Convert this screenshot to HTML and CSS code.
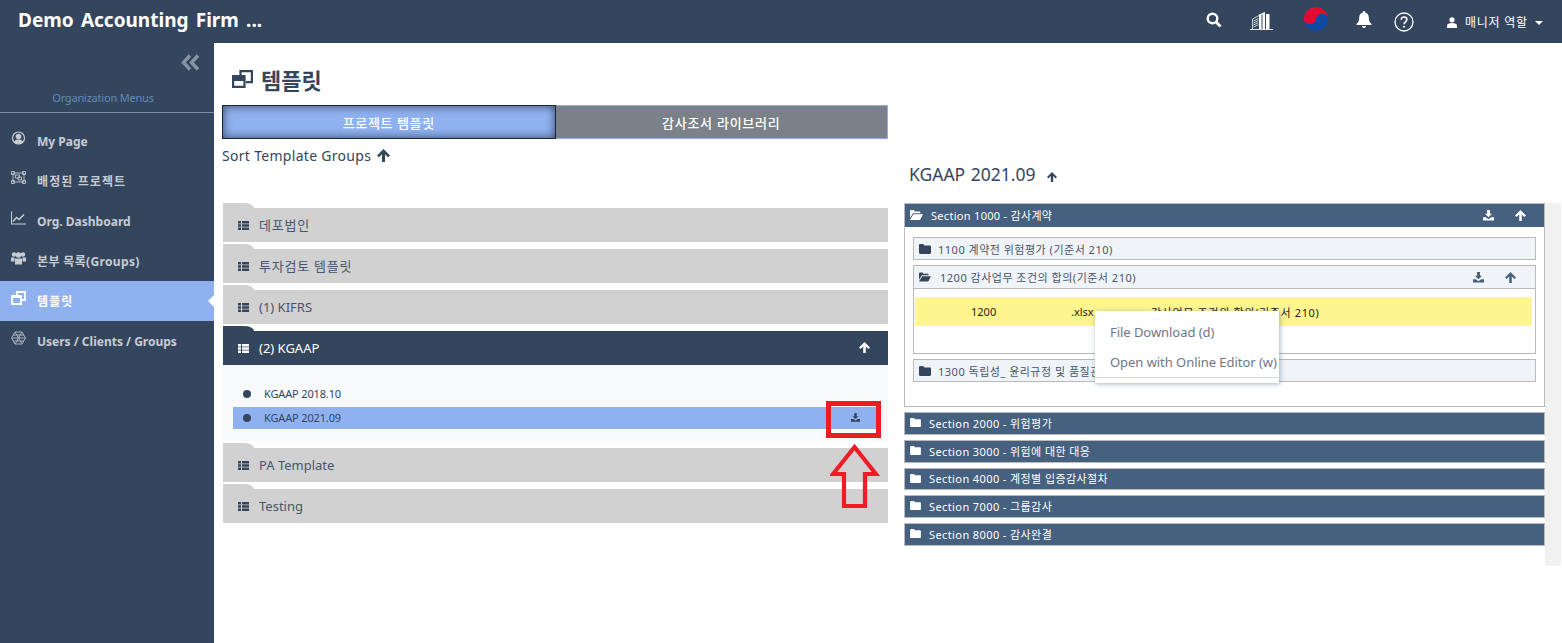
FILE: index.html
```html
<!DOCTYPE html>
<html lang="ko">
<head>
<meta charset="utf-8">
<title>템플릿</title>
<link rel="stylesheet" href="styles.css">
</head>
<body>
<svg class="defs" width="0" height="0">
  <symbol id="i-list" viewBox="0 0 11 9"><path d="M0 0h3v2.400H0zM4 0h7v2.400H4zM0 3.300h3v2.400H0zM4 3.300h7v2.400H4zM0 6.600h3V9H0zM4 6.600h7V9H4z"/></symbol>
  <symbol id="i-folder" viewBox="0 0 12 10"><path d="M1.200 0h3l1.200 1.400h5.400c.7 0 1.200.5 1.200 1.200v6.200c0 .7-.5 1.200-1.200 1.200H1.200C.5 10 0 9.500 0 8.800V1.200C0 .5.500 0 1.200 0z"/></symbol>
  <symbol id="i-open" viewBox="0 0 13 10"><path d="M0 8V1.200C0 .5.500 0 1.200 0h2.600l1.200 1.400h4.200c.7 0 1.200.5 1.200 1.200v.6H3L0 8zM3.400 4.200H13L10 10H0l3.400-5.800z"/></symbol>
  <symbol id="i-up" viewBox="0 0 12 12"><path d="M6 0l6 6-1.700 1.700L7.400 4.900V12H4.600V4.900L1.700 7.700 0 6z"/></symbol>
  <symbol id="i-down" viewBox="0 0 12 12"><path d="M4.400 0h3.200v4.200h2.300L6 8 2.100 4.200h2.300zM0 8h3l3 2 3-2h3v3.500H0z"/></symbol>
  <symbol id="i-clone" viewBox="0 0 21 18"><path fill="none" stroke="currentColor" stroke-width="2.200" d="M8.500 5V1.100h11.400v11h-6"/><path fill="none" stroke="currentColor" stroke-width="2.200" d="M1.100 6h11.400v10.900H1.100z"/><path fill="currentColor" d="M1 5h11.500v6H1z"/></symbol>
</svg>

<header class="topbar">
  <div class="brand">Demo Accounting Firm ...</div>
  <div class="top-tools">
    <svg class="t-search" viewBox="0 0 16 16"><circle cx="6.500" cy="6.500" r="4.800" fill="none" stroke="#fff" stroke-width="2.400"/><path d="M10 10l4.500 4.500" stroke="#fff" stroke-width="2.800"/></svg>
    <svg class="t-building" viewBox="0 0 23 18"><path d="M0 17.500h23" stroke="#dfe3e8" fill="none"/><path d="M2.500 17V7L9 3.500M3.500 9l5-2.500M3.500 11l5-2.500M3.500 13l5-2.500M3.500 15l5-2.500" stroke="#dfe3e8" stroke-width=".9" fill="none"/><path d="M9 2.500L15 0v17H9zM16 2h3.500v15H16z" fill="#fff"/><path d="M11.500 2.500h1V17h-1z" fill="#34465e"/></svg>
    <svg class="t-flag" viewBox="0 0 24 24"><circle cx="12" cy="12" r="12" fill="#0f49a3"/><path d="M0 12a12 12 0 0 1 24 0c0-3.300-2.700-5-6-5s-6 2.500-6 5-2.700 5-6 5-6-1.700-6-5z" fill="#e30a32"/></svg>
    <svg class="t-bell" viewBox="0 0 16 17"><path fill="#fff" d="M8 0c.8 0 1.300.6 1.200 1.400C11.600 2 12.800 4 12.800 6.500c0 3.500 1 5 2.700 6.500v1H.5v-1C2.200 11.500 3.200 10 3.200 6.500c0-2.500 1.200-4.500 3.600-5.100C6.700.6 7.200 0 8 0zM6 15h4c0 1.100-.9 2-2 2s-2-.9-2-2z"/></svg>
    <svg class="t-help" viewBox="0 0 20 20"><circle cx="10" cy="10" r="9" fill="none" stroke="#fff" stroke-width="1.300"/><path d="M7.200 7.800C7.200 6 8.400 5 10 5s2.900 1 2.900 2.600c0 2.300-2.900 2.300-2.900 4.700" fill="none" stroke="#fff" stroke-width="1.500"/><circle cx="10" cy="14.800" r="1" fill="#fff"/></svg>
    <div class="t-user">
      <svg class="t-person" viewBox="0 0 10 11"><circle cx="5" cy="2.800" r="2.600" fill="#fff"/><path d="M0 11V8.500C0 7 2 6 5 6s5 1 5 2.500V11z" fill="#fff"/></svg>
      <span class="ko">매니저 역할</span>
      <span class="caret"></span>
    </div>
  </div>
</header>

<div class="shell">
  <nav class="sidebar">
    <div class="collapse">
      <svg class="collapse-icon" viewBox="0 0 19 17" fill="none" stroke="#8593a5" stroke-width="3.400"><path d="M9 1.500L2.500 8.500 9 15.500M17 1.500L10.500 8.500 17 15.500"/></svg>
    </div>
    <div class="org-label">Organization Menus</div>
    <ul class="menu">
      <li class="menu-item">
        <svg class="m-icon" viewBox="0 0 14 14"><circle cx="7" cy="7" r="6" fill="none" stroke="#c8ccd2" stroke-width="1.200"/><circle cx="7" cy="5.500" r="2.800" fill="#c8ccd2"/><path d="M2.500 11c1-2 2.500-2.500 4.500-2.500s3.500.5 4.500 2.500c-2.500 2.500-6.500 2.500-9 0z" fill="#c8ccd2"/></svg>
        <span>My Page</span>
      </li>
      <li class="menu-item">
        <svg class="m-icon" viewBox="0 0 15 14" fill="none" stroke="#b6bcc5" stroke-width="1"><path d="M2 2h11v9H2zM.5.500h3v3h-3zM11.500.500h3v3h-3zM.5 9.500h3v3h-3zM11.500 9.500h3v3h-3zM4.500 4h4v3h-4zM7 6h3.500v3H7z"/></svg>
        <span class="ko-wide">배정된 프로젝트</span>
      </li>
      <li class="menu-item">
        <svg class="m-icon" viewBox="0 0 15 13" fill="none" stroke="#c8ccd2" stroke-width="1.100"><path d="M.5 0v12.500H15"/><path d="M2 10l3.500-4 2.500 2 5-5" stroke-width="1.500"/></svg>
        <span>Org. Dashboard</span>
      </li>
      <li class="menu-item">
        <svg class="m-icon" viewBox="0 0 15 13" fill="#c8ccd2"><circle cx="3" cy="3" r="2.200"/><circle cx="12" cy="3" r="2.200"/><circle cx="7.500" cy="3.500" r="2.800"/><path d="M0 6h3.500v4H0zM11.500 6H15v4h-3.500zM4 7h7v6H4z"/></svg>
        <span class="ko-mix">본부 목록(Groups)</span>
      </li>
      <li class="menu-item active">
        <svg class="m-icon" viewBox="0 0 15 14" fill="none" stroke="#fff" stroke-width="1.800"><path d="M6 4V1h8v8h-4"/><path d="M1 5h9v8H1z"/><path d="M1 5.800h9" stroke-width="2.400"/></svg>
        <span class="ko-wide">템플릿</span>
      </li>
      <li class="menu-item">
        <svg class="m-icon" viewBox="0 0 15 14" fill="none" stroke="#b6bcc5" stroke-width=".9"><path d="M4 1h7l3.500 6-3.500 6H4L.5 7zM4 1l7 12M11 1L4 13M.5 7h14M2 4h11M2 10h11"/></svg>
        <span>Users / Clients / Groups</span>
      </li>
    </ul>
  </nav>

  <main class="content">
    <h1 class="page-title">
      <svg class="title-icon"><use href="#i-clone"/></svg>
      <span>템플릿</span>
    </h1>
    <div class="columns">
      <section class="left">
        <div class="tabs">
          <div class="tab tab-on">프로젝트 템플릿</div>
          <div class="tab tab-off">감사조서 라이브러리</div>
        </div>
        <div class="sort">Sort Template Groups <svg class="sort-up"><use href="#i-up"/></svg></div>
        <div class="groups">
          <div class="group"><svg class="g-icon"><use href="#i-list"/></svg><span class="ko g-ko">데포법인</span></div>
          <div class="group"><svg class="g-icon"><use href="#i-list"/></svg><span class="ko g-ko">투자검토 템플릿</span></div>
          <div class="group"><svg class="g-icon"><use href="#i-list"/></svg><span>(1) KIFRS</span></div>
          <div class="group group-open"><svg class="g-icon"><use href="#i-list"/></svg><span>(2) KGAAP</span><svg class="g-up"><use href="#i-up"/></svg></div>
          <div class="group-body">
            <div class="tpl"><i class="dot"></i><span class="tpl-name">KGAAP 2018.10</span></div>
            <div class="tpl tpl-on"><i class="dot"></i><span class="tpl-name">KGAAP 2021.09</span><svg class="tpl-down"><use href="#i-down"/></svg></div>
          </div>
          <div class="group"><svg class="g-icon"><use href="#i-list"/></svg><span>PA Template</span></div>
          <div class="group"><svg class="g-icon"><use href="#i-list"/></svg><span>Testing</span></div>
        </div>
      </section>

      <section class="right">
        <h2 class="r-title">KGAAP 2021.09 <svg class="r-up"><use href="#i-up"/></svg></h2>
        <div class="r-wrap">
          <div class="sections">
            <div class="sec-open">
              <div class="sec-head sec-head-open">
                <svg class="s-open"><use href="#i-open"/></svg><span>Section 1000 - 감사계약</span>
                <span class="spacer"></span>
                <svg class="s-act"><use href="#i-down"/></svg><svg class="s-act"><use href="#i-up"/></svg>
              </div>
              <div class="sec-body">
                <div class="sub"><div class="sub-head"><svg class="sub-ic"><use href="#i-folder"/></svg><span>1100 계약전 위험평가 (기준서 210)</span></div></div>
                <div class="sub">
                  <div class="sub-head sub-head-open">
                    <svg class="sub-ic sub-ic-open"><use href="#i-open"/></svg><span>1200 감사업무 조건의 합의(기준서 210)</span>
                    <span class="spacer"></span>
                    <svg class="s-act"><use href="#i-down"/></svg><svg class="s-act"><use href="#i-up"/></svg>
                  </div>
                  <div class="sub-body">
                    <div class="file-row"><span>1200</span><span>.xlsx</span><span class="file-name">감사업무 조건의 합의(기준서 210)</span></div>
                  </div>
                </div>
                <div class="sub"><div class="sub-head"><svg class="sub-ic"><use href="#i-folder"/></svg><span>1300 독립성_ 윤리규정 및 품질관리</span></div></div>
              </div>
            </div>
            <div class="sec"><svg class="s-folder"><use href="#i-folder"/></svg><span>Section 2000 - 위험평가</span></div>
            <div class="sec"><svg class="s-folder"><use href="#i-folder"/></svg><span>Section 3000 - 위험에 대한 대응</span></div>
            <div class="sec sec-short"><svg class="s-folder"><use href="#i-folder"/></svg><span>Section 4000 - 계정별 입증감사절차</span></div>
            <div class="sec"><svg class="s-folder"><use href="#i-folder"/></svg><span>Section 7000 - 그룹감사</span></div>
            <div class="sec"><svg class="s-folder"><use href="#i-folder"/></svg><span>Section 8000 - 감사완결</span></div>
          </div>
          <div class="gutter"></div>
        </div>
      </section>
    </div>
  </main>
</div>

<div class="ctx-menu">
  <div class="ctx-item">File Download (d)</div>
  <div class="ctx-item">Open with Online Editor (w)</div>
  <div class="ctx-rule"></div>
</div>
<div class="red-box"></div>
<svg class="red-arrow" viewBox="0 0 50 68"><path d="M24.500 5L46 32H35V64H14V32H3z" fill="none" stroke="#ee1c25" stroke-width="4.200"/></svg>
</body>
</html>
```
FILE: styles.css
```css
* { box-sizing: border-box; }
html, body { margin: 0; height: 100%; overflow: hidden; }
body { font-family: "Noto Sans", "Noto Sans CJK KR", sans-serif; color: #34465e; background: #fff; font-size: 12px; position: relative; }
.defs { position: absolute; }
.ko { letter-spacing: .75px; }
.ko-wide { letter-spacing: 1.100px; }
.ko-mix { letter-spacing: .35px; }

.topbar { height: 43px; background: #34465e; display: flex; align-items: center; justify-content: space-between; color: #fff; padding: 0 18px 0 18px; }
.brand { font-size: 19px; font-weight: 700; word-spacing: 2.300px; margin-top: -3px; }
.top-tools { display: flex; align-items: center; }
.t-search { width: 16px; height: 16px; margin-right: 28px; margin-top: -4px; }
.t-building { width: 23px; height: 18px; margin-right: 31px; margin-top: -2px; }
.t-flag { width: 24px; height: 24px; margin-right: 28px; margin-top: -5px; }
.t-bell { width: 16px; height: 17px; margin-right: 22px; margin-top: -4px; }
.t-help { width: 20px; height: 20px; margin-right: 33px; }
.t-user { display: flex; align-items: center; font-size: 12px; width: 97px; }
.t-person { width: 10px; height: 11px; margin-right: 8px; margin-top: 2px; }
.caret { width: 0; height: 0; border: 4px solid transparent; border-top-color: #fff; border-bottom: 0; margin-left: 7px; margin-top: 2px; }

.shell { display: flex; height: 600px; }
.sidebar { width: 214px; background: #34465e; flex: none; }
.collapse { height: 42px; display: flex; justify-content: flex-end; padding: 11px 14px 0 0; }
.collapse-icon { width: 19px; height: 17px; }
.org-label { height: 28px; font-size: 11px; letter-spacing: -.2px; color: #6289b8; text-align: center; border-bottom: 1px solid #7f90a8; padding: 5px 8px 0 0; line-height: 16px; }
.menu { list-style: none; margin: 0; padding: 8px 0 0; }
.menu-item { height: 40px; display: flex; align-items: center; padding-left: 11px; color: #c8ccd2; font-weight: 700; font-size: 12px; position: relative; }
.m-icon { width: 15px; height: 14px; margin-right: 11px; margin-top: -6px; flex: none; }
.menu-item.active { background: #90b1f0; color: #fff; }
.menu-item.active::after { content: ""; position: absolute; right: 0; top: 14px; border: 6px solid transparent; border-right-color: #fff; border-left: 0; }

.content { flex: 1; min-width: 0; padding: 0 0 0 8px; }
.page-title { margin: 0; height: 62px; display: flex; align-items: center; font-size: 22px; font-weight: 700; color: #34465e; padding: 9px 0 0 10px; }
.title-icon { width: 21px; height: 18px; margin-right: 8px; color: #34465e; }
.columns { display: flex; align-items: flex-start; }
.left { width: 666px; flex: none; }
.tabs { display: flex; height: 34px; }
.tab { flex: 1; display: flex; align-items: center; justify-content: center; font-size: 13px; font-weight: 500; color: #fff; letter-spacing: .6px; }
.tab-on { background: #90b1f0; border: 1px solid #1d2738; box-shadow: inset 0 0 10px #34465e; }
.tab-off { background: #7b8188; border: 1px solid #8fb0e8; border-left: 0; letter-spacing: .75px; }
.sort { font-size: 14px; height: 34px; padding-top: 6px; color: #34465e; line-height: 22px; letter-spacing: .3px; }
.sort-up { width: 13px; height: 13px; fill: #34465e; vertical-align: -1px; margin-left: 2px; }
.groups { padding: 30px 0 0 1px; }
.group { height: 34px; background: #d1d1d1; display: flex; align-items: center; padding-left: 15px; margin: 5px 0 7px; font-size: 13px; color: #46566d; position: relative; }
.group::before { content: ""; position: absolute; left: 0; top: -5px; width: 31px; height: 5px; background: inherit; border-top-right-radius: 10px 5px; }
.g-ko { margin-top: -2px; }
.g-icon { width: 11px; height: 9px; fill: #34465e; margin-right: 10px; flex: none; }
.group-open { background: #34465e; color: #fff; margin-bottom: 0; }
.group-open .g-icon { fill: #fff; }
.g-up { width: 11px; height: 11px; fill: #fff; position: absolute; right: 18px; top: 11px; }
.group-body { height: 76px; background: #f8f9fb; padding: 18px 8px 0 10px; margin-bottom: 7px; }
.tpl { height: 22px; display: flex; align-items: center; font-size: 11px; color: #34465e; padding-left: 10px; margin-bottom: 2px; position: relative; }
.tpl-on { background: #90b1f0; }
.tpl-name { margin-top: -2px; letter-spacing: -.15px; }
.dot { width: 8px; height: 8px; border-radius: 50%; background: #34465e; margin-right: 13px; }
.tpl-down { width: 9px; height: 9px; fill: #34465e; position: absolute; right: 20px; top: 6px; }

.right { margin-left: 16px; width: 657px; flex: none; }
.r-title { margin: 0; height: 98px; padding: 57px 0 0 5px; font-size: 17.500px; font-weight: 400; color: #34465e; line-height: 24px; word-spacing: 1px; }
.r-up { width: 10px; height: 10px; fill: #34465e; margin-left: 6px; vertical-align: -1px; }
.r-wrap { display: flex; }
.sections { width: 641px; flex: none; }
.gutter { width: 16px; height: 363px; background: #f1f1f1; }
.sec-open { border: 1px solid #b9b9b9; height: 204px; margin-bottom: 5px; }
.sec-head { display: flex; align-items: center; background: #46607f; color: #fff; }
.sec-head-open { height: 23px; padding: 0 18px 1px 5px; font-size: 11px; letter-spacing: .3px; }
.s-open { width: 13px; height: 10px; fill: #fff; margin-right: 8px; }
.spacer { flex: 1; }
.s-act { width: 11px; height: 11px; fill: #fff; margin-left: 21px; }
.sec-body { padding: 10px 8px 0 8px; }
.sub { border: 1px solid #b9b9b9; background: #fff; margin-bottom: 5px; }
.sub-head { height: 21px; background: #f0f3f7; display: flex; align-items: center; padding-left: 5px; font-size: 11px; letter-spacing: .5px; color: #46566d; }
.sub-head-open { height: 23px; border-bottom: 1px solid #b9b9b9; padding-right: 19px; }
.sub-head-open .s-act { fill: #46607f; margin-left: 21px; }
.sub-ic { width: 12px; height: 10px; fill: #34465e; margin-right: 7px; flex: none; }
.sub-ic-open { margin-right: 9px; }
.sub-body { height: 64px; padding: 8px 3px 0 1px; }
.file-row { height: 29px; background: #fff68f; display: grid; grid-template-columns: 100px 80px 1fr; padding-left: 56px; align-items: center; font-size: 11px; color: #222; }
.file-name { letter-spacing: .65px; }
.sec { height: 23px; background: #46607f; border: 1px solid #b9b9b9; display: flex; align-items: center; color: #fff; font-size: 11px; letter-spacing: .4px; padding: 0 0 2px 5px; margin-bottom: 5px; }
.sec-short { height: 22px; }
.s-folder { width: 11px; height: 9px; fill: #fff; margin-right: 8px; }

.ctx-menu { position: absolute; left: 1095px; top: 311px; width: 184px; height: 72px; background: #fff; box-shadow: 1px 1px 5px rgba(90,120,150,.55); padding-top: 6px; font-size: 13px; color: #6d7785; }
.ctx-item { height: 30px; display: flex; align-items: center; padding-left: 15px; white-space: nowrap; letter-spacing: -.05px; }
.ctx-rule { border-top: 1px solid #d8d8d8; }
.red-box { position: absolute; left: 826px; top: 401px; width: 55px; height: 37px; border: 5px solid #ee1c25; }
.red-arrow { position: absolute; left: 830px; top: 442px; width: 50px; height: 68px; }
```
